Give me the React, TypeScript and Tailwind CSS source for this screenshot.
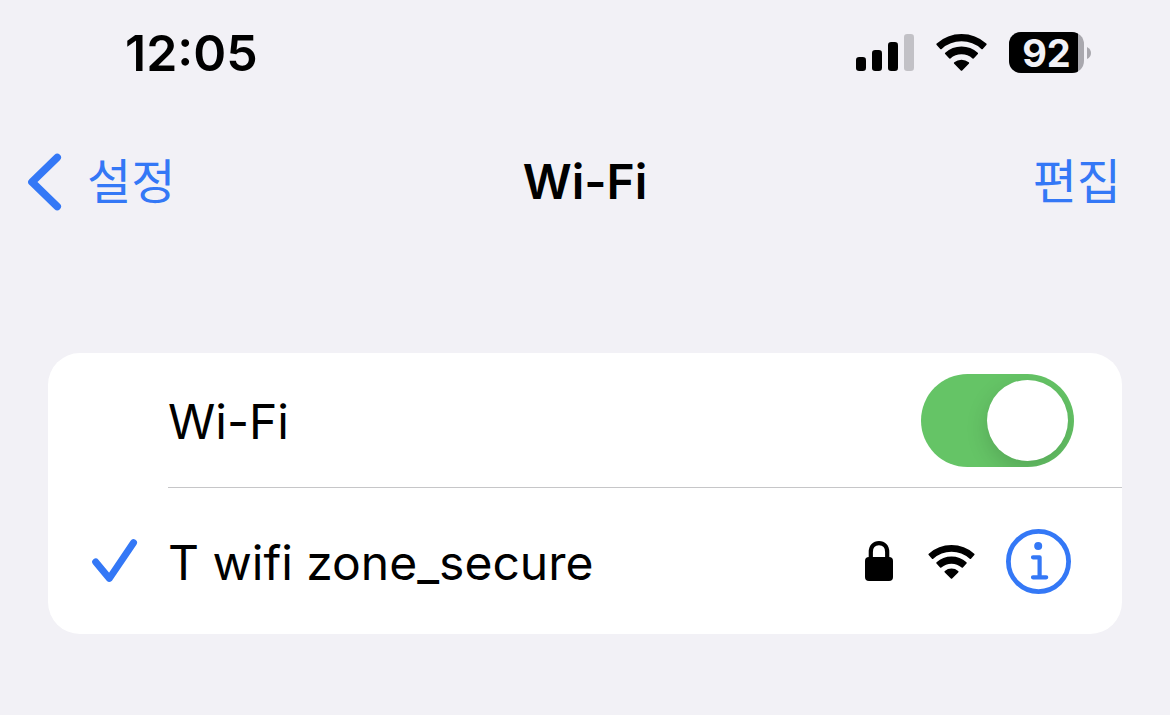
import { useState } from "react";

function WifiIcon({ className }: { className: string }) {
  return (
    <svg
      viewBox="-25.5 -37 51 37"
      className={className}
      fill="black"
      stroke="black"
      strokeWidth="2"
      strokeLinejoin="round"
      aria-hidden="true"
    >
      <path d="M-24.1-26.7A36 36 0 0 1 24.1-26.7L20.5-22.8A30.6 30.6 0 0 0-20.5-22.8Z" />
      <path d="M-15.6-17.6A23.5 23.5 0 0 1 15.6-17.6L11.7-13.3A17.7 17.7 0 0 0-11.7-13.3Z" />
      <path d="M-6.6-7.9A10.3 10.3 0 0 1 6.6-7.9L0-1.3Z" />
    </svg>
  );
}

function SignalIcon() {
  return (
    <svg viewBox="0 0 58 37" className="h-[37px] w-[58px]" aria-hidden="true">
      <rect x="0" y="23" width="10" height="14" rx="3.2" />
      <rect x="16" y="16" width="10" height="21" rx="3.2" />
      <rect x="32" y="8" width="10" height="29" rx="3.2" />
      <rect x="48" y="0" width="10" height="37" rx="3.2" fill="#c2c1c6" />
    </svg>
  );
}

function Battery({ level }: { level: number }) {
  return (
    <div className="flex items-center gap-[3px]">
      <div className="relative flex h-[41px] w-[75px] items-center justify-center">
        <div className="absolute inset-0 overflow-hidden rounded-xl bg-[#a9a8ae]">
          <div className="h-full bg-black" style={{ width: `${level}%` }} />
        </div>
        <span className="relative text-[38px] leading-[42px] font-bold text-[#f2f1f6]">{level}</span>
      </div>
      <svg viewBox="0 0 4 12" className="h-3 w-1" aria-hidden="true">
        <path d="M0 0Q4 2 4 6T0 12Z" fill="#a9a8ae" />
      </svg>
    </div>
  );
}

function StatusBar() {
  return (
    <div className="flex h-[105px] items-center justify-between pr-[79px] pl-[125px]">
      <time className="text-[50px] leading-[60px] font-semibold">12:05</time>
      <div className="flex items-center gap-[22px]">
        <SignalIcon />
        <WifiIcon className="h-[37px] w-[51px]" />
        <Battery level={92} />
      </div>
    </div>
  );
}

function NavBar() {
  return (
    <header className="grid h-[154px] grid-cols-[1fr_auto_1fr] items-center px-7">
      <a href="#settings" className="flex items-center gap-[25px] justify-self-start text-[48px] leading-[60px] text-[#3478f6]">
        <svg viewBox="0 0 34 58" className="h-[58px] w-[34px]" fill="none" stroke="currentColor" strokeWidth="7.6" strokeLinecap="round" strokeLinejoin="round" aria-hidden="true">
          <path d="M29.2 4.5L4 29L29.2 53.5" />
        </svg>
        설정
      </a>
      <h1 className="text-[48px] leading-[60px] font-semibold">Wi-Fi</h1>
      <button type="button" className="justify-self-end pr-[21px] text-[48px] leading-[60px] text-[#3478f6]">
        편집
      </button>
    </header>
  );
}

function Switch({ id, checked, onChange }: { id: string; checked: boolean; onChange: (on: boolean) => void }) {
  return (
    <input
      id={id}
      type="checkbox"
      role="switch"
      checked={checked}
      onChange={(e) => onChange(e.target.checked)}
      className="flex h-[93px] w-[153px] shrink-0 cursor-pointer appearance-none items-center overflow-hidden rounded-full bg-[#e9e9ea] p-1.5 before:size-[81px] before:rounded-full before:bg-white before:shadow-[0_8px_22px_rgba(0,0,0,0.15)] before:content-[''] checked:justify-end checked:bg-[#65c466]"
    />
  );
}

function LockIcon() {
  return (
    <svg viewBox="0 0 28 40" className="h-10 w-7" aria-hidden="true">
      <rect x="0" y="16" width="28" height="24" rx="4" />
      <path d="M5.8 18V11C5.8 5.4 9.2 2.2 14 2.2S22.2 5.4 22.2 11V18" fill="none" stroke="black" strokeWidth="4.2" />
    </svg>
  );
}

function InfoIcon() {
  return (
    <svg viewBox="0 0 65 65" className="size-[65px]" fill="none" stroke="currentColor" strokeLinecap="round" strokeLinejoin="round" aria-hidden="true">
      <circle cx="32.5" cy="32.5" r="30.1" strokeWidth="4.8" />
      <circle cx="32.2" cy="17" r="4" fill="currentColor" stroke="none" />
      <path d="M27 28.3H33.6V48M27 48.3H40.2" strokeWidth="4.2" />
    </svg>
  );
}

export default function App() {
  const [wifiOn, setWifiOn] = useState(true);

  return (
    <div className="min-h-screen bg-[#f2f1f6] font-['Inter','Noto_Sans_CJK_KR',sans-serif] text-black">
      <StatusBar />
      <NavBar />
      <main className="px-12 pt-[94px] pb-20">
        <section className="overflow-hidden rounded-[32px] bg-white text-[48px] leading-[60px]">
          <div className="ml-[120px] flex h-[135px] items-center justify-between border-b border-[#c6c6c8] pr-12">
            <label htmlFor="wifi" className="pt-1">Wi-Fi</label>
            <Switch id="wifi" checked={wifiOn} onChange={setWifiOn} />
          </div>
          <div className="flex h-[146px] items-center pr-[51px] pl-11">
            <svg viewBox="0 0 46 44" className="h-11 w-[46px] text-[#3478f6]" fill="none" stroke="currentColor" strokeWidth="7" strokeLinecap="round" strokeLinejoin="round" role="img" aria-label="연결됨">
              <path d="M3.7 22.9L17.4 39.4L41.5 3.7" />
            </svg>
            <span className="ml-[30px] grow pt-1">T wifi zone_secure</span>
            <LockIcon />
            <WifiIcon className="mt-0.5 ml-[35px] h-[34px] w-[47px]" />
            <button type="button" aria-label="T wifi zone_secure" className="ml-[31px] text-[#3478f6]">
              <InfoIcon />
            </button>
          </div>
        </section>
      </main>
    </div>
  );
}
